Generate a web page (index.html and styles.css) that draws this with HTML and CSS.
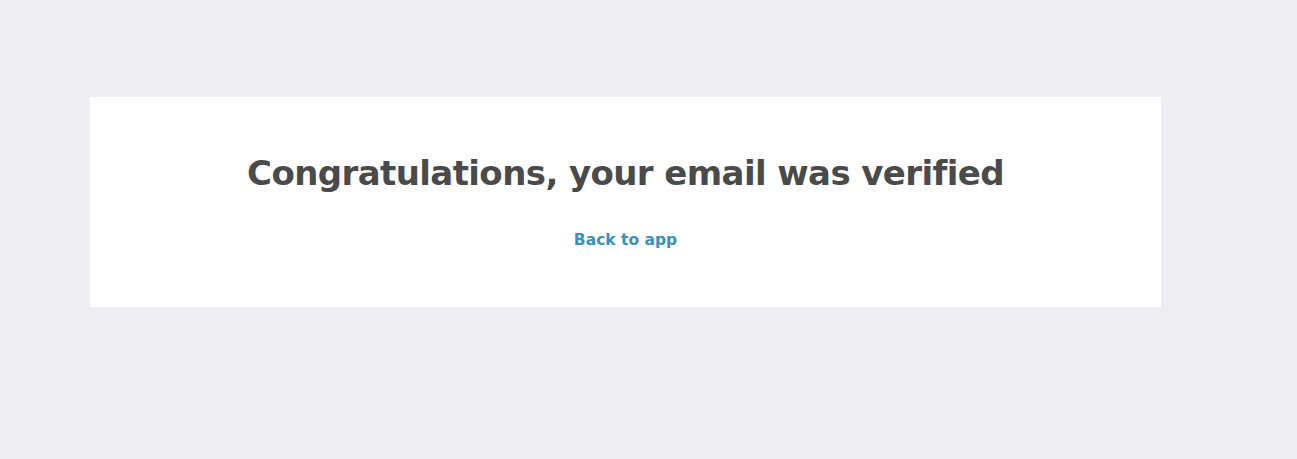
FILE: index.html
```html
<!DOCTYPE html>
<html lang="en">
<head>
    <meta charset="UTF-8">
    <meta name="viewport" content="width=device-width, initial-scale=1.0">
    <title>Email verified</title>
    <link rel="stylesheet" href="styles.css">
</head>
<body>
    <div class="page">
        <div class="card">
            <h1 class="title">Congratulations, your email was verified</h1>
            <a class="back-link" href="#">Back to app</a>
        </div>
    </div>
</body>
</html>
```

FILE: styles.css
```css
body {
    background-color: #eeeef2;
    margin: 0;
    padding: 0;
    font-family: "DejaVu Sans", "Open Sans", sans-serif;
}

.page {
    padding: 97px 136px 0 90px;
}

.card {
    background-color: white;
    height: 210px;
    box-sizing: border-box;
    display: flex;
    flex-direction: column;
    align-items: center;
    padding-top: 52px;
}

.title {
    margin: 0;
    color: #4a4a4a;
    font-size: 34px;
    letter-spacing: -0.6px;
    font-weight: 700;
    line-height: 48px;
}

.back-link {
    margin-top: 34px;
    color: #3d8fb5;
    text-decoration: none;
    font-size: 15.5px;
    font-weight: 700;
}
```
